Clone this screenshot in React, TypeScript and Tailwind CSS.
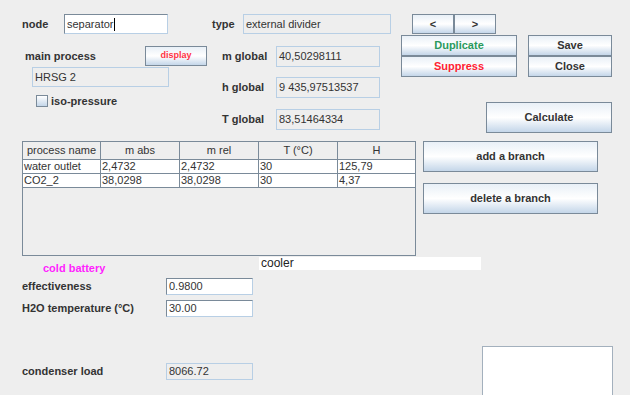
import React from 'react';

const font = { fontFamily: '"Liberation Sans", Arial, sans-serif' };

type BtnProps = { className?: string; children: React.ReactNode };

const Btn: React.FC<BtnProps> = ({ className = '', children }) => (
  <div
    className={`flex items-center justify-center border border-[#7a8a99] bg-linear-to-b from-[#e9f0f7] via-[#ffffff] to-[#c4d6e9] font-bold text-[#333333] ${className}`}
  >
    {children}
  </div>
);

type FieldProps = { className?: string; editable?: boolean; children?: React.ReactNode };

const Field: React.FC<FieldProps> = ({ className = '', editable, children }) => (
  <div
    className={`flex items-center overflow-hidden whitespace-nowrap pl-[2px] text-[#333333] ${
      editable
        ? 'border border-[#7a8a99] border-b-[#b8cfe5] border-r-[#b8cfe5] bg-white'
        : 'border border-[#b8cfe5] bg-[#eeeeee]'
    } ${className}`}
  >
    {children}
  </div>
);

export default function App() {
  const columns = ['process name', 'm abs', 'm rel', 'T (°C)', 'H'];
  const rows = [
    ['water outlet', '2,4732', '2,4732', '30', '125,79'],
    ['CO2_2', '38,0298', '38,0298', '30', '4,37'],
  ];
  const widths = ['w-[78px]', 'w-[79px]', 'w-[79px]', 'w-[79px]', 'w-[77px]'];

  return (
    <div
      className="h-[395px] w-[630px] overflow-hidden bg-[#eeeeee] text-[11px] text-[#333333]"
      style={font}
    >
      {/* top block */}
      <div className="flex items-start">
        {/* left column */}
        <div className="ml-[22px] w-[186px]">
          <div className="mt-[14px] flex h-[20px] items-center">
            <span className="w-[42px] font-bold">node</span>
            <Field editable className="h-[20px] w-[104px]">
              separator
              <span className="ml-px inline-block h-[13px] w-px bg-black" />
            </Field>
          </div>
          <div className="mt-[12px] flex h-[20px] items-center">
            <span className="pl-[3px] font-bold">main process</span>
            <Btn className="ml-auto mr-px h-[20px] w-[62px] text-[9px] !text-[#ff3344]">display</Btn>
          </div>
          <Field className="ml-[10px] mt-px h-[20px] w-[137px]">HRSG 2</Field>
          <div className="ml-[14px] mt-[6px] flex items-center gap-[3px]">
            <div className="h-[12px] w-[12px] border border-[#7a8a99] bg-linear-to-b from-[#ffffff] to-[#c4d6e9]" />
            <span className="font-bold">iso-pressure</span>
          </div>
        </div>

        {/* middle column */}
        <div className="ml-[4px] w-[180px]">
          <div className="mt-[14px] flex h-[20px] items-center">
            <span className="w-[31px] font-bold">type</span>
            <Field className="h-[20px] w-[148px]">external divider</Field>
          </div>
          <div className="mt-[12px] flex h-[21px] items-center">
            <span className="w-[64px] pl-[10px] font-bold">m global</span>
            <Field className="h-[21px] w-[104px]">40,50298111</Field>
          </div>
          <div className="mt-[10px] flex h-[21px] items-center">
            <span className="w-[64px] pl-[10px] font-bold">h global</span>
            <Field className="h-[21px] w-[104px]">9 435,97513537</Field>
          </div>
          <div className="mt-[11px] flex h-[21px] items-center">
            <span className="w-[64px] pl-[10px] font-bold">T global</span>
            <Field className="h-[21px] w-[104px]">83,51464334</Field>
          </div>
        </div>

        {/* right column */}
        <div className="ml-[9px] w-[211px]">
          <div className="ml-[11px] mt-[14px] flex">
            <Btn className="h-[20px] w-[42px]">&lt;</Btn>
            <Btn className="h-[20px] w-[42px]">&gt;</Btn>
          </div>
          <div className="mt-px flex">
            <div className="w-[116px]">
              <Btn className="h-[21px] !text-[#2a9a5c]">Duplicate</Btn>
              <Btn className="h-[21px] !text-[#ff2233]">Suppress</Btn>
            </div>
            <div className="ml-[11px] w-[84px]">
              <Btn className="h-[21px]">Save</Btn>
              <Btn className="h-[21px]">Close</Btn>
            </div>
          </div>
          <Btn className="ml-[85px] mt-[25px] h-[31px] w-[126px]">Calculate</Btn>
        </div>
      </div>

      {/* table + branch buttons */}
      <div className="mt-[8px] flex items-start">
        <div className="ml-[22px] h-[115px] w-[394px] border border-[#7a8a99]">
          <div className="flex h-[18px] border-b border-[#7a8a99]">
            {columns.map((c, i) => (
              <div
                key={c}
                className={`${widths[i]} flex items-center justify-center ${
                  i < 4 ? 'border-r border-[#7a8a99]' : ''
                }`}
              >
                {c}
              </div>
            ))}
          </div>
          {rows.map((r, ri) => (
            <div key={ri} className="flex h-[14px] border-b border-[#7a8a99] bg-white">
              {r.map((v, i) => (
                <div
                  key={i}
                  className={`${widths[i]} pl-px leading-[13px] ${i < 4 ? 'border-r border-[#7a8a99]' : ''}`}
                >
                  {v}
                </div>
              ))}
            </div>
          ))}
        </div>
        <div className="ml-[7px] w-[175px]">
          <Btn className="h-[31px]">add a branch</Btn>
          <Btn className="mt-[11px] h-[31px]">delete a branch</Btn>
        </div>
      </div>

      {/* cold battery */}
      <div className="mt-px pl-[22px]">
        <div className="flex h-[13px] items-start">
          <div className="w-[237px] pl-[21px] pt-[5px] font-bold leading-[13px] text-[#ff22ff]">
            cold battery
          </div>
          <div className="h-[13px] w-[222px] bg-white pl-[2px] leading-[13px] text-[12px] text-[#222222]">
            cooler
          </div>
        </div>
        <div className="mt-[8px] flex h-[17px] items-center">
          <span className="w-[144px] font-bold">effectiveness</span>
          <Field editable className="h-[17px] w-[87px]">0.9800</Field>
        </div>
        <div className="mt-[5px] flex h-[17px] items-center">
          <span className="w-[144px] font-bold">H2O temperature (°C)</span>
          <Field editable className="h-[17px] w-[87px]">30.00</Field>
        </div>
        <div className="mt-[29px] flex items-start">
          <div className="mt-[17px] flex h-[17px] items-center">
            <span className="w-[144px] font-bold">condenser load</span>
            <Field className="h-[17px] w-[87px]">8066.72</Field>
          </div>
          <div className="ml-[229px] h-[60px] w-[131px] border-x border-t border-[#a3b0bd] bg-white" />
        </div>
      </div>
    </div>
  );
}
